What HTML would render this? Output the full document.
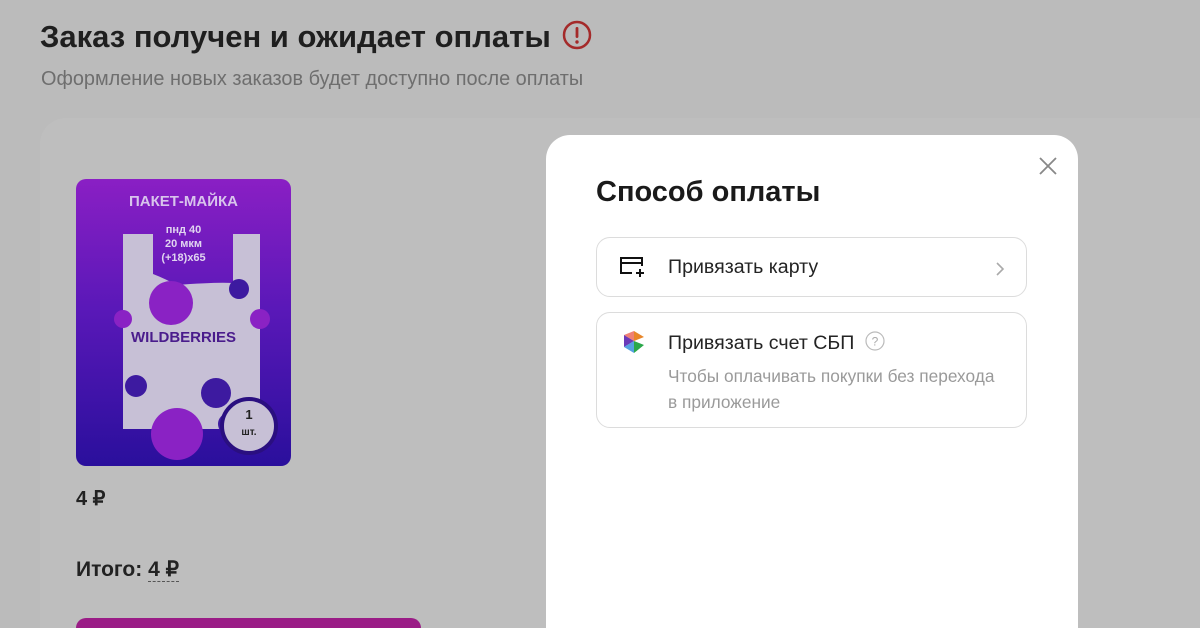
<!DOCTYPE html>
<html><head><meta charset="utf-8"><style>
*{margin:0;padding:0;box-sizing:border-box}
html,body{width:1200px;height:628px;overflow:hidden}
body{background:#bbbbbb;font-family:"Liberation Sans","Noto Sans CJK SC",sans-serif;position:relative}
.h1{position:absolute;left:40px;top:19px;font-size:31px;font-weight:bold;color:#1f1f1f;letter-spacing:0;white-space:nowrap}
.sub{position:absolute;left:41px;top:68px;font-size:19.9px;color:#6e6e6e;white-space:nowrap}
.card{position:absolute;left:40px;top:118px;width:1160px;height:510px;background:#bebebe;border-radius:26px 0 0 0}
.img{position:absolute;left:76px;top:179px;width:215px;height:287px;border-radius:10px;background:linear-gradient(#8a1fc4,#5a18b8 45%,#2a0f9c);overflow:hidden}
.price{position:absolute;left:76px;top:486px;font-size:20px;font-weight:bold;color:#222}
.tot{position:absolute;left:76px;top:557px;font-size:21px;font-weight:bold;color:#222}
.tot span{border-bottom:1.5px dashed #555}
.btn{position:absolute;left:76px;top:618px;width:345px;height:10px;background:#9a1c86;border-radius:10px 10px 0 0}
.modal{position:absolute;left:546px;top:135px;width:532px;height:493px;background:#fff;border-radius:24px 24px 0 0}
.mt{position:absolute;left:50px;top:41px;font-size:29px;font-weight:bold;color:#1a1a1a}
.opt{position:absolute;left:50px;width:431px;border:1px solid #dcdcdc;border-radius:14px}
.opt .t{position:absolute;left:71px;font-size:19.6px;color:#242424;white-space:nowrap}
</style></head><body>
<div class="h1">Заказ получен и ожидает оплаты <svg width="32" height="32" viewBox="0 0 32 32" style="vertical-align:-4px;margin-left:2px"><circle cx="16" cy="16" r="13" fill="none" stroke="#a42a2a" stroke-width="2.5"/><rect x="14.6" y="8" width="2.8" height="11" rx="1.2" fill="#a42a2a"/><circle cx="16" cy="23" r="1.7" fill="#a42a2a"/></svg></div>
<div class="sub">Оформление новых заказов будет доступно после оплаты</div>
<div class="card"></div>
<div class="img">
<div style="position:absolute;top:14px;width:100%;text-align:center;color:#d8c4ec;font-weight:bold;font-size:15px">ПАКЕТ-МАЙКА</div>
<svg width="215" height="287" style="position:absolute;left:0;top:0">
<path d="M47 55 H77 V95 Q90 100 100 106 Q140 103 157 104 V55 H184 V250 H47 Z" fill="#c7c0d6"/>
<circle cx="95" cy="124" r="22" fill="#8a22c4"/><circle cx="101" cy="255" r="26" fill="#8a22c4"/>
<circle cx="140" cy="214" r="15" fill="#3d1aa0"/><circle cx="60" cy="207" r="11" fill="#3d1aa0"/>
<circle cx="153" cy="245" r="11" fill="#3d1aa0"/><circle cx="184" cy="140" r="10" fill="#8a22c4"/>
<circle cx="47" cy="140" r="9" fill="#8a22c4"/><circle cx="163" cy="110" r="10" fill="#3d1aa0"/>
<circle cx="173" cy="247" r="27" fill="#c7c0d6" stroke="#2a0f80" stroke-width="4"/>
</svg>
<div style="position:absolute;top:44px;left:60px;width:95px;text-align:center;color:#e0d4f0;font-weight:bold;font-size:11px;line-height:14px">пнд 40<br>20 мкм<br>(+18)х65</div>
<div style="position:absolute;top:150px;width:100%;text-align:center;color:#4a1c8c;font-weight:bold;font-size:15px">WILDBERRIES</div>
<div style="position:absolute;left:160px;top:228px;width:26px;text-align:center;color:#222;font-weight:bold;font-size:13px;line-height:16px">1<br><span style="font-size:10px">шт.</span></div>
</div>
<div class="price">4 ₽</div>
<div class="tot">Итого: <span>4 ₽</span></div>
<div class="btn"></div>
<div class="modal">
<svg width="20" height="20" viewBox="0 0 20 20" style="position:absolute;left:492px;top:21px"><path d="M2 2L18 18M18 2L2 18" stroke="#888" stroke-width="1.8"/></svg>
<div class="mt">Способ оплаты</div>
<div class="opt" style="top:102px;height:60px">
<svg width="28" height="24" viewBox="0 0 28 24" style="position:absolute;left:21px;top:17px"><path d="M14 18H3V3H24V11M3 8H24" fill="none" stroke="#111" stroke-width="2"/><path d="M22 14V22M18 18H26" stroke="#111" stroke-width="2"/></svg>
<div class="t" style="top:18px">Привязать карту</div>
<svg width="10" height="14" style="position:absolute;left:398px;top:24px"><path d="M2 1L8 7L2 13" fill="none" stroke="#aaa" stroke-width="1.6"/></svg>
</div>
<div class="opt" style="top:177px;height:116px">
<svg width="24" height="28" viewBox="0 0 24 28" style="position:absolute;left:25px;top:16px"><path d="M2 6L12 12L2 18Z" fill="#6a3ab8"/><path d="M12 2L22 8L12 12Z" fill="#e8862a"/><path d="M12 12L22 16L12 24Z" fill="#2aa84a"/><path d="M2 6L12 12V2Z" fill="#e84a3a" opacity=".7"/><path d="M12 12L2 18L12 24Z" fill="#2a8ad8" opacity=".8"/></svg>
<div class="t" style="top:18px">Привязать счет СБП <svg width="20" height="20" viewBox="0 0 20 20" style="vertical-align:-2px;margin-left:5px"><circle cx="10" cy="10" r="9" fill="none" stroke="#bbb" stroke-width="1.2"/><text x="10" y="14.5" text-anchor="middle" font-size="12" fill="#aaa" font-family="Liberation Sans">?</text></svg></div>
<div style="position:absolute;left:71px;top:50px;font-size:17.3px;line-height:26px;color:#9a9a9a;white-space:nowrap">Чтобы оплачивать покупки без перехода<br>в приложение</div>
</div>
</div>
</body></html>
